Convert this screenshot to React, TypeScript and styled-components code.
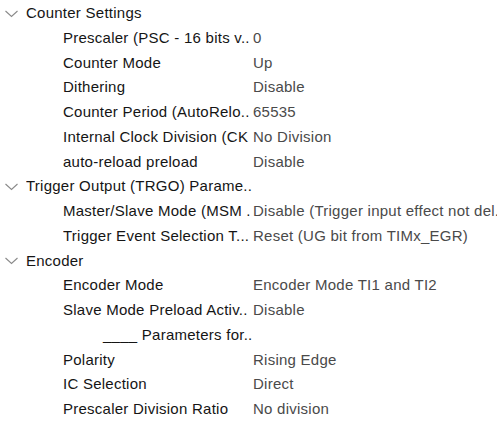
import React from "react";
import styled, { createGlobalStyle } from "styled-components";

const Global = createGlobalStyle`
  html, body { margin: 0; padding: 0; background: #ffffff; }
  body { font-family: "Liberation Sans", Arial, sans-serif; font-size: 15px; letter-spacing: 0.25px; }
`;

const Tree = styled.div`
  display: flex;
  flex-direction: column;
  width: 497px;
  padding-top: 1px;
  overflow: hidden;
`;

const Row = styled.div`
  display: flex;
  align-items: center;
  height: 24.75px;
  line-height: 24.75px;
  white-space: nowrap;
`;

const Chevron = styled.span`
  display: flex;
  width: 26px;
  padding-left: 5px;
  padding-top: 1px;
  box-sizing: border-box;
  flex: none;
`;

const HeaderText = styled.span`
  width: 227px;
  overflow: hidden;
  color: #151515;
  flex: none;
`;

const Label = styled.span<{ $indent?: number }>`
  flex: none;
  width: 190px;
  margin-left: 63px;
  padding-left: ${(p) => p.$indent ?? 0}px;
  box-sizing: border-box;
  overflow: hidden;
  color: #151515;
`;

const Value = styled.span`
  flex: 1;
  overflow: hidden;
  color: #4a4a4a;
`;

type Item =
  | { kind: "group"; title: string }
  | { kind: "param"; label: string; value?: string; indent?: number };

const items: Item[] = [
  { kind: "group", title: "Counter Settings" },
  { kind: "param", label: "Prescaler (PSC - 16 bits v..", value: "0" },
  { kind: "param", label: "Counter Mode", value: "Up" },
  { kind: "param", label: "Dithering", value: "Disable" },
  { kind: "param", label: "Counter Period (AutoRelo..", value: "65535" },
  { kind: "param", label: "Internal Clock Division (CK", value: "No Division" },
  { kind: "param", label: "auto-reload preload", value: "Disable" },
  { kind: "group", title: "Trigger Output (TRGO) Parame.." },
  { kind: "param", label: "Master/Slave Mode (MSM .", value: "Disable (Trigger input effect not del." },
  { kind: "param", label: "Trigger Event Selection T...", value: "Reset (UG bit from TIMx_EGR)" },
  { kind: "group", title: "Encoder" },
  { kind: "param", label: "Encoder Mode", value: "Encoder Mode TI1 and TI2" },
  { kind: "param", label: "Slave Mode Preload Activ..", value: "Disable" },
  { kind: "param", label: "____ Parameters for..", indent: 40 },
  { kind: "param", label: "Polarity", value: "Rising Edge" },
  { kind: "param", label: "IC Selection", value: "Direct" },
  { kind: "param", label: "Prescaler Division Ratio", value: "No division" },
];

const ChevronIcon = () => (
  <svg width="13" height="8" viewBox="0 0 13 8">
    <path d="M0.5 1 L6.5 6.5 L12.5 1" fill="none" stroke="#8a8a8a" strokeWidth="1.1" />
  </svg>
);

export default function App() {
  return (
    <>
      <Global />
      <Tree>
        {items.map((it, i) =>
          it.kind === "group" ? (
            <Row key={i}>
              <Chevron>
                <ChevronIcon />
              </Chevron>
              <HeaderText>{it.title}</HeaderText>
            </Row>
          ) : (
            <Row key={i}>
              <Label $indent={it.indent}>{it.label}</Label>
              <Value>{it.value ?? ""}</Value>
            </Row>
          )
        )}
      </Tree>
    </>
  );
}
